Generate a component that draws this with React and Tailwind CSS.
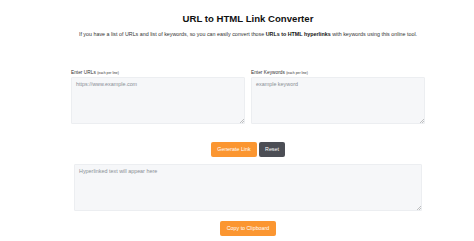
import React from "react";

function Grip() {
  return (
    <svg className="absolute right-[1px] bottom-[1px]" width="4" height="4" viewBox="0 0 4 4">
      <path d="M4 0 L0 4 M4 2 L2 4" stroke="#9a9a9a" strokeWidth="0.6" />
    </svg>
  );
}

function Area({ placeholder, className }) {
  return (
    <div className={"relative " + className}>
      <textarea
        placeholder={placeholder}
        className="block w-full h-full resize-none bg-[#f6f7f9] border border-[#eceef1] rounded-[1px] px-[4px] py-[3px] text-[5.4px] leading-[7px] text-[#555] placeholder:text-[#8a8f96] outline-none font-['Liberation_Sans',Arial,sans-serif]"
      />
      <Grip />
    </div>
  );
}

export default function App() {
  return (
    <div className="w-[474px] h-[241px] bg-white font-['Liberation_Sans',Arial,sans-serif] text-[#222]">
      <div className="pl-[22px]">
        <h1 className="pt-[12px] text-center text-[9.6px] leading-[13px] font-bold text-[#111]">
          URL to HTML Link Converter
        </h1>
        <p className="mt-[6px] text-center text-[5.35px] leading-[6px] text-[#333]">
          If you have a list of URLs and list of keywords, so you can easily convert those{" "}
          <b className="text-[#111]">URLs to HTML hyperlinks</b> with keywords using this online tool.
        </p>
      </div>
      <div className="mt-[33px] flex gap-[6px] pl-[71px]">
        <div className="flex flex-col w-[174px]">
          <label className="text-[4.8px] leading-[6px] text-[#333] mb-[1px]">
            Enter URLs <span className="text-[3.4px]">(each per line)</span>
          </label>
          <Area placeholder="https://www.example.com" className="h-[47px]" />
        </div>
        <div className="flex flex-col w-[174px]">
          <label className="text-[4.8px] leading-[6px] text-[#333] mb-[1px]">
            Enter Keywords <span className="text-[3.4px]">(each per line)</span>
          </label>
          <Area placeholder="example keyword" className="h-[47px]" />
        </div>
      </div>
      <div className="mt-[18px] flex justify-center gap-[2px] pl-[22px]">
        <button className="w-[46px] h-[15px] rounded-[2px] bg-[#fb9631] text-white text-[5.3px] leading-[15px]">
          Generate Link
        </button>
        <button className="w-[26px] h-[15px] rounded-[2px] bg-[#4c4e55] text-white text-[5.3px] leading-[15px]">
          Reset
        </button>
      </div>
      <div className="mt-[7px] pl-[74px]">
        <Area placeholder="Hyperlinked text will appear here" className="w-[348px] h-[47px]" />
      </div>
      <div className="mt-[10px] flex justify-center pl-[22px]">
        <button className="w-[56px] h-[15px] rounded-[2px] bg-[#fb9631] text-white text-[5.3px] leading-[15px]">
          Copy to Clipboard
        </button>
      </div>
    </div>
  );
}
